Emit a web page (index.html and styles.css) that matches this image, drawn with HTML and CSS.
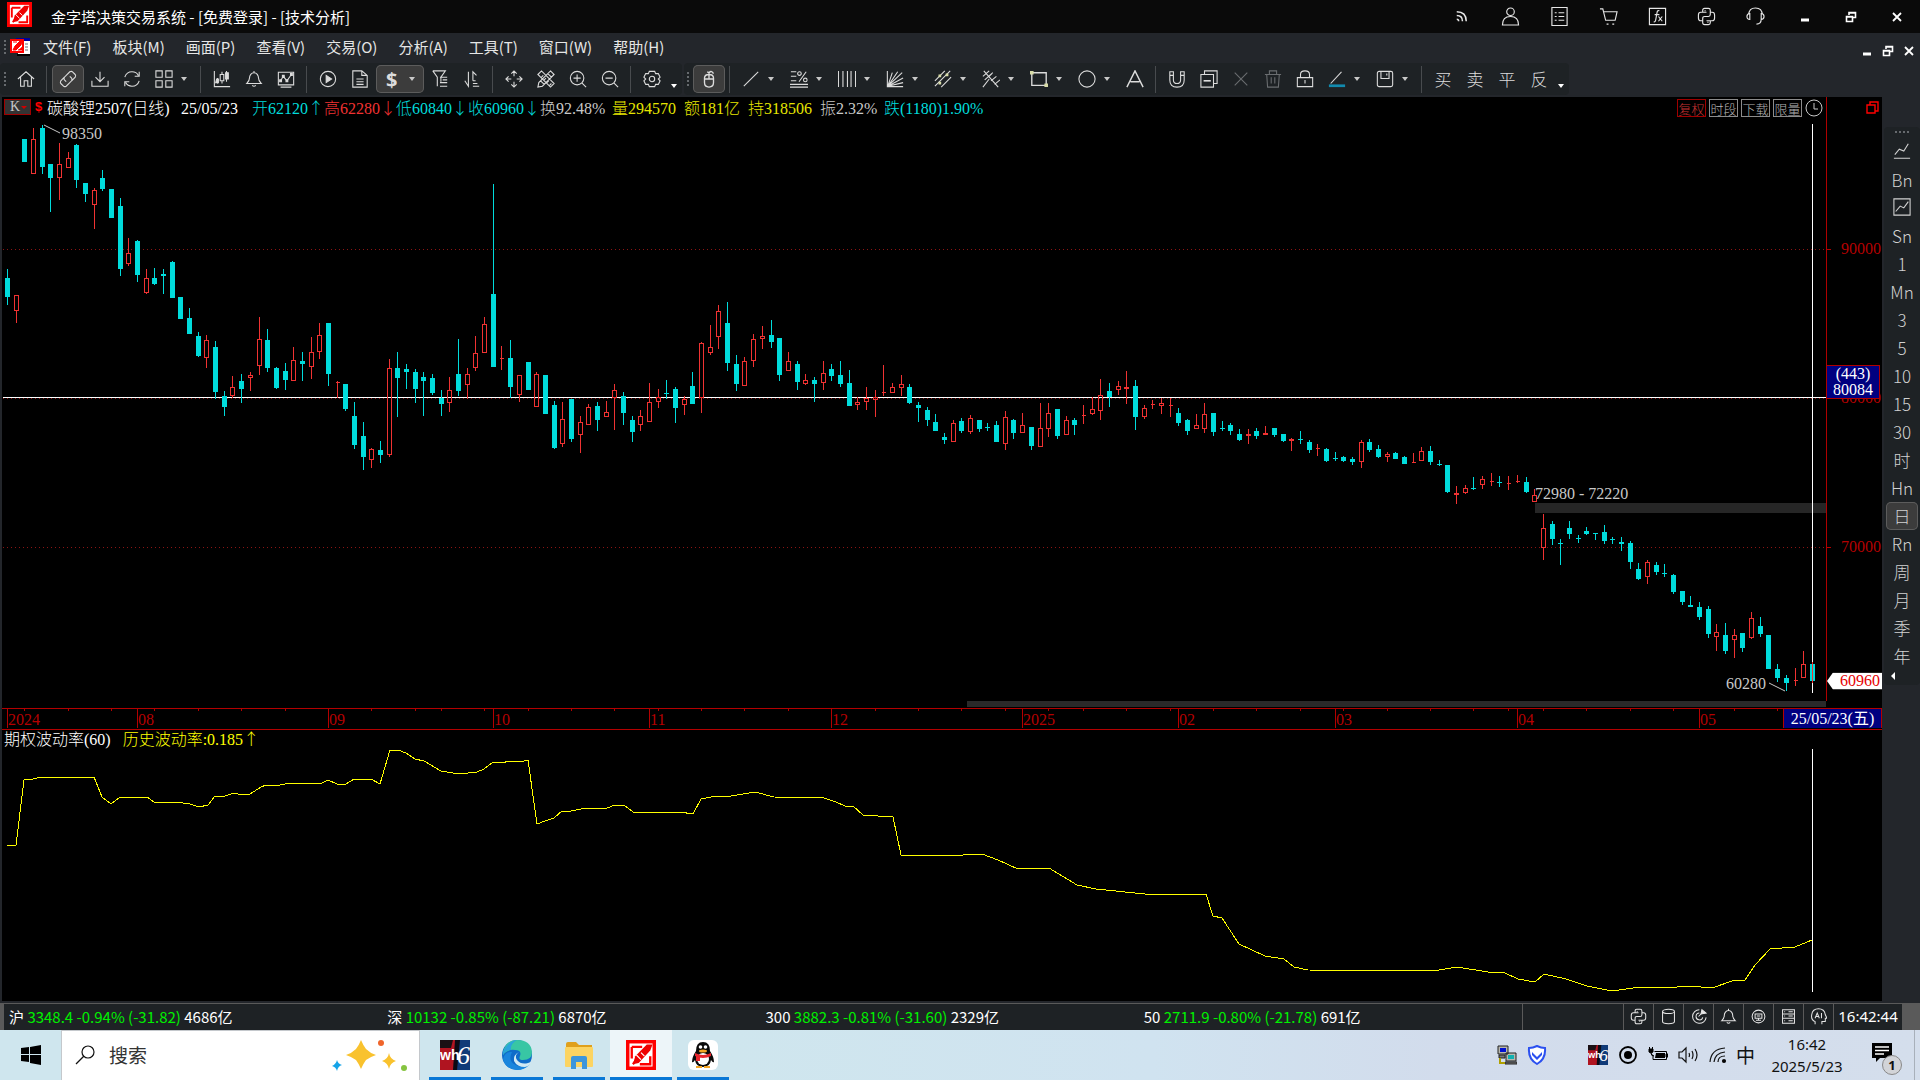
FILE: index.html
```html
<!DOCTYPE html>
<html lang="zh-CN">
<head>
  <meta charset="UTF-8" />
  <title>金字塔决策交易系统</title>
  <meta name="viewport" content="width=device-width, initial-scale=1.0" />
  <link rel="stylesheet" href="styles.css">
</head>
<body>
  <!-- shared icons -->
  <svg class="defs" aria-hidden="true">
    <symbol id="i-logo" viewBox="0 0 26 26"><rect width="26" height="26" fill="#f00"/><rect x="3" y="3" width="20" height="20" fill="#fff"/><path d="M5 6h9M5 6v10M6 21l3-4M21 14v7h-9" stroke="#f00" stroke-width="2" fill="none"/><path d="M6 21l2-7L18 4h5L21 9 11 20z" fill="#e00"/><path d="M9 13l4 4M13 11l3 3" stroke="#fff" stroke-width="1"/></symbol>
    <symbol id="i-bell" viewBox="0 0 20 20"><path d="M10 1v2M10 3c-3 0-5 3-5 6 0 3-1 4-3 6h16c-2-2-3-3-3-6 0-3-2-6-5-6zM8 17q2 2 4 0"/></symbol>
    <symbol id="i-python" viewBox="0 0 20 20"><path d="M6 5V3.500Q6 1.500 8 1.500h4q2 0 2 2V8q0 2-2 2H8q-2 0-2 2v2.500H4q-2.500 0-2.500-3V8.500q0-3 2.500-3h6M14 5.500h2q2.500 0 2.500 3v3q0 3-2.500 3h-6M14 14.500v2q0 2-2 2H8q-2 0-2-2v-2M8.500 3.500v1M11.500 15.500v1"/></symbol>
    <symbol id="i-restore" viewBox="0 0 12 12"><path d="M4 4V1.500h6.500v5H8M1.500 5.500h6v5h-6zM4 2h6.500M1.500 6h6" stroke-width="1.600"/></symbol>
    <symbol id="i-close" viewBox="0 0 12 12"><path d="M2 2l8 8M10 2l-8 8" stroke-width="1.800"/></symbol>
    <symbol id="i-min" viewBox="0 0 12 12"><path d="M2 9h8" stroke-width="3"/></symbol>
  </svg>

  <header class="titlebar">
    <svg class="logo"><use href="#i-logo"/></svg>
    <h1>金字塔决策交易系统 - [免费登录] - [技术分析]</h1>
    <div class="title-tools">
      <button aria-label="资讯"><svg class="ico" viewBox="0 0 20 20"><path d="M5 5q10 0 10 10M5 9q6 0 6 6M5 13q2 0 2 2" stroke-width="1.600"/></svg></button>
      <button aria-label="用户"><svg class="ico" viewBox="0 0 20 20"><circle cx="10" cy="5" r="4"/><path d="M1.500 19q0-9 8.500-9t8.500 9z"/></svg></button>
      <button aria-label="列表"><svg class="ico" viewBox="0 0 20 20"><path d="M2 .5h16v19H2zM5 6h2M9 6h6M5 10h2M9 10h6M5 14h2M9 14h6"/></svg></button>
      <button aria-label="商城"><svg class="ico" viewBox="0 0 20 20"><path d="M1 2h3l3 12h10l2-9H5M8 18h2M14 18h2"/></svg></button>
      <button aria-label="公式"><svg class="ico" viewBox="0 0 20 20"><path d="M1.500 1.500h17v17h-17zM12 4q-2-1-2.500 2L8 14q-.5 2-2 1.500M7 8h5M11 10l4 5M15 10l-4 5"/></svg></button>
      <button aria-label="Python"><svg class="ico"><use href="#i-python"/></svg></button>
      <button aria-label="客服"><svg class="ico" viewBox="0 0 20 20"><path d="M3 8q0-7 7-7t7 7M4 7v6q-3 0-3-3t3-3zM16 7v6q3 0 3-3t-3-3zM16 13q0 5-5 5"/></svg></button>
    </div>
    <div class="win-tools">
      <button aria-label="最小化"><svg class="ico"><use href="#i-min"/></svg></button>
      <button aria-label="还原"><svg class="ico"><use href="#i-restore"/></svg></button>
      <button aria-label="关闭"><svg class="ico"><use href="#i-close"/></svg></button>
    </div>
  </header>

  <nav class="menubar">
    <span class="grip"></span>
    <svg class="menu-logo" viewBox="0 0 20 18"><path d="M8 0h12v16H8z" fill="#fff"/><path d="M6 0h14v3H6z" fill="#00009a"/><path d="M7 16h13v2H7z" fill="#000"/><path d="M15 6h3M15 9h3M15 12h3" stroke="#667"/><rect y="1" width="14" height="14" fill="#f00"/><rect x="2" y="3" width="10" height="10" fill="#fff"/><path d="M3 12l2-4 5-5h2l-1 4-5 5zM3 4h4M8 12h4V9" fill="#f00" stroke="#f00"/></svg>
    <button>文件(F)</button>
    <button>板块(M)</button>
    <button>画面(P)</button>
    <button>查看(V)</button>
    <button>交易(O)</button>
    <button>分析(A)</button>
    <button>工具(T)</button>
    <button>窗口(W)</button>
    <button>帮助(H)</button>
    <div class="doc-tools">
      <button aria-label="最小化"><svg class="ico"><use href="#i-min"/></svg></button>
      <button aria-label="还原"><svg class="ico"><use href="#i-restore"/></svg></button>
      <button aria-label="关闭"><svg class="ico"><use href="#i-close"/></svg></button>
    </div>
  </nav>

  <div class="toolbars">
    <div class="toolbar">
      <span class="grip"></span>
      <button aria-label="首页"><svg class="ico" viewBox="0 0 20 20"><path d="M1 10l9-8 9 8M4 8v10h4v-6h4v6h4V8"/></svg></button>
      <i class="sep"></i>
      <button class="on" aria-label="联动"><svg class="ico" viewBox="0 0 20 20"><path d="M8 13l-2-2q-1-1 0-3l6-6q2-1 3 0l3 3q1 1 0 3l-4 4M12 7l2 2q1 1 0 3l-6 6q-2 1-3 0l-3-3q-1-1 0-3l4-4"/></svg></button>
      <button aria-label="下载"><svg class="ico" viewBox="0 0 20 20"><path d="M10 2v11M5 8l5 5 5-5M1 12v6h18v-6"/></svg></button>
      <button aria-label="刷新"><svg class="ico" viewBox="0 0 20 20"><path d="M2 8q2-6 8-6 5 0 7 4M18 2v5h-5M18 12q-2 6-8 6-5 0-7-4M2 18v-5h5"/></svg></button>
      <button class="drop" aria-label="布局"><svg class="ico" viewBox="0 0 20 20"><path d="M1 1h7v7H1zM12 1h7v7h-7zM1 12h7v7H1zM12 12h7v7h-7z"/></svg></button>
      <i class="sep"></i>
      <button aria-label="K线"><svg class="ico" viewBox="0 0 20 20"><path d="M1.500 1v17.500H19M5 9v6M10 2v3M10 12v3M15 1v12"/><path d="M8 5h4v7H8z"/><path d="M14 3h3v7h-3zM4 10h2v4H3z" fill="currentColor"/></svg></button>
      <button aria-label="提醒"><svg class="ico"><use href="#i-bell"/></svg></button>
      <button aria-label="走势"><svg class="ico" viewBox="0 0 20 20"><path d="M1.500 2.500h17v14h-17zM4 19h12M4 12l3-5 4 5 5-7"/><path d="M6 6h2v2H6zM10 11h2v2h-2zM15 4h2v2h-2zM3 11h2v2H3z" fill="currentColor"/></svg></button>
      <i class="sep"></i>
      <button aria-label="播放"><svg class="ico" viewBox="0 0 20 20"><circle cx="10" cy="10" r="8.500"/><path d="M8 6l6 4-6 4z" fill="currentColor"/></svg></button>
      <button aria-label="报告"><svg class="ico" viewBox="0 0 20 20"><path d="M2 1h10l6 5v13H2zM12 1v5h6M6 10h8M6 13h8M6 16h8"/></svg></button>
      <button class="drop on dollar">$</button>
      <button aria-label="筛选"><svg class="ico" viewBox="0 0 20 20"><path d="M2 1h14l-5 7v5M2 1l5 7v10M10 8h8M13 11h5M10 14h8M10 18h8"/></svg></button>
      <button aria-label="排序"><svg class="ico" viewBox="0 0 20 20"><path d="M2 12l4 6V2M11 12V2l4 4M11 12h3M11 15h5M11 18h7"/></svg></button>
      <i class="sep"></i>
      <button aria-label="移动"><svg class="ico" viewBox="0 0 20 20"><path d="M10 1v6M10 13v6M1 10h6M13 10h6M7 4l3-3 3 3M7 16l3 3 3-3M4 7l-3 3 3 3M16 7l3 3-3 3"/></svg></button>
      <button aria-label="画线工具"><svg class="ico" viewBox="0 0 20 20"><path d="M1 5l4-4 14 14-4 4zM15 1l4 4L6 18l-5 1 1-5zM5 8l2-2M8 11l2-2M11 14l2-2M14 17l2-2M12 4l4 4M4 12l4 4"/></svg></button>
      <button aria-label="放大"><svg class="ico" viewBox="0 0 20 20"><circle cx="9" cy="9" r="7.500"/><path d="M14.500 14.500L19 19M5 9h8M9 5v8"/></svg></button>
      <button aria-label="缩小"><svg class="ico" viewBox="0 0 20 20"><circle cx="9" cy="9" r="7.500"/><path d="M14.500 14.500L19 19M5 9h8"/></svg></button>
      <i class="sep"></i>
      <button aria-label="设置"><svg class="ico" viewBox="0 0 20 20"><path d="M7 1.500h6l1 2.500 3 0 2 4-2 2 2 2-2 4-3 0-1 2.500H7L6 16l-3 0-2-4 2-2-2-2 2-4 3 0z"/><circle cx="10" cy="10" r="3"/></svg></button>
      <span class="more"></span>
    </div>
    <div class="toolbar">
      <span class="grip"></span>
      <button class="on" aria-label="鼠标"><svg class="ico" viewBox="0 0 20 20"><path d="M5 9q0-4 5-4t5 4v5q0 5-5 5t-5-5zM5 10h10M10 5v5M10 5V3q3-3 5 1M8 2l2 1" stroke-width="1.500"/></svg></button>
      <i class="sep"></i>
      <button class="drop" aria-label="直线"><svg class="ico" viewBox="0 0 20 20"><path d="M2 18L18 2"/></svg></button>
      <button class="drop" aria-label="百分比"><svg class="ico" viewBox="0 0 20 20"><path d="M1 2h6M1 7h6M1 12h6M0 16h20M0 19h20M18 2l-8 11"/><circle cx="10.500" cy="4" r="2"/><circle cx="17" cy="11" r="2"/></svg></button>
      <button class="drop" aria-label="周期线"><svg class="ico" viewBox="0 0 20 20"><path d="M.5 1v18M5.500 1v18M10.500 1v18M14.500 1v18M19.500 1v18"/></svg></button>
      <button class="drop" aria-label="扇形线"><svg class="ico" viewBox="0 0 20 20"><path d="M1.500 1v17.500H19M2 18L7 3M2 18L13 2M2 18L18 3M2 18L19 9M2 18l17-4"/></svg></button>
      <button class="drop" aria-label="通道线"><svg class="ico" viewBox="0 0 20 20"><path d="M1 12L12 1M1 18L18 1M8 19L19 8"/><path d="M5 5h3v3H5zM13 4h3v3h-3zM5 13h3v3H5z" class="knob"/></svg></button>
      <button class="drop" aria-label="波浪线"><svg class="ico" viewBox="0 0 20 20"><path d="M2 1l16 18M1 7l7-6M3 11l9-8M1 19L8 10M10 12l6-5M14 16l6-5M7 8l4-4"/></svg></button>
      <button class="drop" aria-label="矩形"><svg class="ico" viewBox="0 0 20 20"><path d="M2 3h16v14H2z" stroke-width="1.500"/><path d="M0 1h4v4H0zM16 15h4v4h-4z" class="knob"/></svg></button>
      <button class="drop" aria-label="圆"><svg class="ico" viewBox="0 0 20 20"><circle cx="10" cy="10" r="9"/></svg></button>
      <button aria-label="文字"><svg class="ico" viewBox="0 0 20 20"><path d="M1 19L10 1l9 18M5 13h10" stroke-width="1.600"/></svg></button>
      <i class="sep"></i>
      <button aria-label="吸附"><svg class="ico" viewBox="0 0 20 20"><path d="M2 2h4v9q0 4 4 4t4-4V2h4v9q0 8-8 8t-8-8zM2 6h4M14 6h4"/></svg></button>
      <button aria-label="复制"><svg class="ico" viewBox="0 0 20 20"><path d="M1 5h14v14H1zM5 5V1h14v14h-4"/><path d="M4 12h8" stroke-width="1.800"/></svg></button>
      <button class="dim" aria-label="清除"><svg class="ico" viewBox="0 0 20 20"><path d="M3 3l14 14M17 3L3 17"/></svg></button>
      <button class="dim" aria-label="删除"><svg class="ico" viewBox="0 0 20 20"><path d="M1 5h18M3 5l1 14h12l1-14M6 5V1h8v4M8 8v7M12 8v7"/></svg></button>
      <button aria-label="锁定"><svg class="ico" viewBox="0 0 20 20"><path d="M1.500 8.500h17v10h-17zM5 8V5q0-4 5-4t5 4v3M10 11v4"/></svg></button>
      <button class="drop" aria-label="画笔颜色"><svg class="ico" viewBox="0 0 20 20"><path d="M3 15L15 2"/><path d="M1 17.500h18" class="pen-color"/></svg></button>
      <button class="drop" aria-label="保存"><svg class="ico" viewBox="0 0 20 20"><rect x="1.500" y="1.500" width="17" height="17" rx="2"/><path d="M5.500 1.500v8h9v-8M12 4v2"/></svg></button>
      <i class="sep"></i>
      <button class="word">买</button>
      <button class="word">卖</button>
      <button class="word">平</button>
      <button class="word">反</button>
      <span class="more"></span>
    </div>
  </div>

  <main class="workspace">
    <section class="charts">
      <div class="price">
        <div class="quote">
          <button class="k-btn">K<i></i></button>
          <span class="s-mark">$</span>
          <div class="quote-items">
            <span class="white">碳酸锂2507(日线)</span>
            <span class="white">25/05/23</span>
            <span class="down">开62120<b>↑</b></span>
            <span class="up">高62280<b>↓</b></span>
            <span class="down">低60840<b>↓</b></span>
            <span class="down">收60960<b>↓</b></span>
            <span>换92.48%</span>
            <span class="gold">量294570</span>
            <span class="gold">额181亿</span>
            <span class="gold">持318506</span>
            <span>振2.32%</span>
            <span class="down">跌(1180)1.90%</span>
          </div>
          <div class="badges">
            <button class="red">复权</button>
            <button>时段</button>
            <button>下载</button>
            <button>限量</button>
            <svg class="clock" viewBox="0 0 18 18"><circle cx="9" cy="9" r="8"/><path d="M9 4v6h4"/></svg>
          </div>
        </div>
        <svg class="plot" id="pricePlot" viewBox="2 121 1824 580" preserveAspectRatio="none"></svg>
        <div class="price-axis">
          <svg class="stack-icon" viewBox="0 0 13 13"><path d="M1 4h8v8H1zM4 4V1h8v9H9"/></svg>
          <span class="tick-label" style="top: 25.2%">90000</span>
          <span class="tick-label" style="top: 49.9%">80000</span>
          <span class="tick-label" style="top: 74.5%">70000</span>
          <span class="cross-label" style="top: 44.4%">(443)<br>80084</span>
          <span class="last-label" style="top: 96.7%">60960</span>
        </div>
      </div>
      <div class="scroll-track"><i></i></div>
      <div class="date-axis" id="dateAxis">
        <span class="date-box">25/05/23(五)</span>
      </div>
      <div class="vol">
        <div class="vol-head"><span>期权波动率(60)</span><span class="gold">历史波动率:0.185<b>↑</b></span></div>
        <svg class="plot" id="volPlot" viewBox="2 749 1824 252" preserveAspectRatio="none"></svg>
      </div>
    </section>

    <aside class="side">
      <div class="periods">
        <span class="dots"></span>
        <button aria-label="分时"><svg class="ico" viewBox="0 0 20 20"><path d="M1 18h18M2 14l5-6 5 2 5-8"/></svg></button>
        <button>Bn</button>
        <button aria-label="走势图"><svg class="ico" viewBox="0 0 20 20"><path d="M1 1h18v18H1zM3 15l5-6 4 2 5-7"/></svg></button>
        <button>Sn</button>
        <button>1</button>
        <button>Mn</button>
        <button>3</button>
        <button>5</button>
        <button>10</button>
        <button>15</button>
        <button>30</button>
        <button>时</button>
        <button>Hn</button>
        <button class="on">日</button>
        <button>Rn</button>
        <button>周</button>
        <button>月</button>
        <button>季</button>
        <button>年</button>
        <span class="fold"></span>
      </div>
    </aside>
  </main>

  <footer class="statusbar">
    <div class="indices">
      <span>沪 <em>3348.4 -0.94% (-31.82)</em> 4686亿</span>
      <span>深 <em>10132 -0.85% (-87.21)</em> 6870亿</span>
      <span>300 <em>3882.3 -0.81% (-31.60)</em> 2329亿</span>
      <span>50 <em>2711.9 -0.80% (-21.78)</em> 691亿</span>
    </div>
    <div class="status-gap"></div>
    <button aria-label="Python"><svg class="ico"><use href="#i-python"/></svg></button>
    <button aria-label="数据"><svg class="ico" viewBox="0 0 20 20"><ellipse cx="10" cy="4" rx="7" ry="2.500"/><path d="M3 4v12q0 2.500 7 2.500t7-2.500V4"/></svg></button>
    <button aria-label="雷达"><svg class="ico" viewBox="0 0 20 20"><path d="M11 2a8 8 0 1 0 8 9M11 6a4 4 0 1 0 4 5M10 10l4-4"/><path d="M13 7l1-5 5 4z" fill="currentColor"/></svg></button>
    <button aria-label="提醒"><svg class="ico"><use href="#i-bell"/></svg></button>
    <button aria-label="连接"><svg class="ico" viewBox="0 0 20 20"><circle cx="10" cy="10" r="7.500"/><path d="M6 7h8v5H6zM10 12v2M7 14.500h6M8 9.500h4"/></svg></button>
    <button aria-label="服务器"><svg class="ico" viewBox="0 0 20 20"><path d="M3 2h14v16H3zM3 7h14M3 12h14M10 4.500h5M10 9.500h5M10 15h5M5 4.500h1M5 9.500h1M5 15h1"/></svg></button>
    <button aria-label="AI"><svg class="ico" viewBox="0 0 20 20"><path d="M6 19v-3Q1 14 2 8q1-7 8-7t8 7l2 4h-2v4h-4v3M6 12l2.500-6 2.500 6M7 10h3M13.500 6v6"/></svg></button>
    <time>16:42:44</time>
    <i class="size-grip"></i>
  </footer>

  <div class="taskbar">
    <button class="start" aria-label="开始"><svg viewBox="0 0 20 20"><path d="M0 3l8-1v7H0zM9 2l11-2v9H9zM0 10h8v7l-8-1zM9 10h11v10L9 18z" fill="#000"/></svg></button>
    <label class="search">
      <svg class="ico" viewBox="0 0 20 20"><circle cx="13" cy="7" r="6"/><path d="M9 11l-8 8"/></svg>
      <input type="text" placeholder="搜索" aria-label="搜索">
      <svg class="sparkle" viewBox="0 0 76 32"><path d="M30 1q2 5 5 9 4 4 10 6-6 2-10 5-3 4-5 9-2-5-5-9-4-3-10-5 6-2 10-6 3-4 5-9z" fill="#f9c22e"/><path d="M58 14q1 6 7 8-6 2-7 8-1-6-7-8 6-2 7-8z" fill="#f9c22e"/><path d="M6 21q1 4 5 5-4 1-5 6-1-4-5-5 4-2 5-6z" fill="#14a3e8"/><circle cx="50" cy="4" r="3" fill="#f0652b"/><circle cx="73" cy="29" r="3" fill="#86c440"/></svg>
    </label>
    <div class="apps">
      <button aria-label="文华财经"><svg viewBox="0 0 30 30"><rect width="15" height="30" fill="#b01420"/><rect x="15" width="15" height="30" fill="#103a78"/><path d="M0 0h13l-2 8H0z" fill="#1a1014"/><path d="M15 0h5l-3 30h-4z" fill="#0a0a14"/><text x="0" y="20" class="wh-text">wh</text><text x="17" y="24" class="wh-six">6</text></svg></button>
      <button aria-label="Edge"><svg viewBox="0 0 30 30"><circle cx="15" cy="15" r="15" fill="#0f6cc9"/><path d="M1 12Q4 0 15 0q14 0 15 12 0 8-9 8-5 0-3-4 2-6-5-6Q5 9 1 15z" fill="#38c6a4"/><path d="M1 12Q6 1 15 0 8 4 9 10 4 10 1 15z" fill="#2aa4dc"/><path d="M10 12q-4 8 2 12 7 5 16 0-5 6-13 6Q3 29 1 19q2-8 9-7z" fill="#1a86dd"/><path d="M17 12q-5 3-2 8 4 5 11 3l3-1q-1 4-6 5-8 0-11-6-1-6 5-9z" fill="#d0e9f3"/></svg></button>
      <button aria-label="文件资源管理器"><svg viewBox="0 0 30 30"><path d="M2 4q0-2 2-2h8l3 3h13v9H2z" fill="#e0a01c"/><rect x="1" y="7" width="28" height="20" rx="1" fill="#fcd462"/><path d="M7 29V18q0-2 2-2h12q2 0 2 2v11h-5v-7h-6v7z" fill="#3c96dc"/></svg></button>
      <button class="active" aria-label="金字塔"><svg viewBox="0 0 30 30"><use href="#i-logo"/></svg></button>
      <button aria-label="QQ"><svg viewBox="0 0 30 30"><rect width="30" height="30" rx="6" fill="#fff"/><path d="M15 2q7 0 7 9 4 6 4 11-1 1-3-2-1 7-8 7t-8-7q-2 3-3 2 0-5 4-11 0-9 7-9z" fill="#0a0a0a"/><ellipse cx="15" cy="19" rx="6" ry="6" fill="#fff"/><path d="M7 13q8 4 16 0v3q-8 4-16 0zM8 16h4v5H8z" fill="#e8252c"/><circle cx="12.500" cy="7" r="1.800" fill="#fff"/><circle cx="17.500" cy="7" r="1.800" fill="#fff"/><ellipse cx="15" cy="11" rx="4" ry="1.500" fill="#f5a623"/><path d="M8 26h6v2H8zM16 26h6v2h-6z" fill="#f5a623"/></svg></button>
    </div>
    <div class="tray">
      <svg viewBox="0 0 20 20"><path d="M1 1h10v8H1zM9 8h10v8H9z" fill="#b8b8b0" stroke="#222"/><path d="M3 3h6v4H3z" fill="#0010d0"/><path d="M11 10h6v4h-6z" fill="#10b0b0"/><path d="M2 10h6v3H2zM8 17h12v2H8z" fill="#777" stroke="#222"/><path d="M3 13v5h5" stroke="#b0a000" stroke-width="2" fill="none"/></svg>
      <svg class="shield" viewBox="0 0 20 20"><path d="M10 1q4 2 8 2 1 11-8 16Q1 14 2 3q4 0 8-2z" fill="#fff" stroke="#2b50f0" stroke-width="2"/><path d="M5 7l5 5 5-5v3l-5 5-5-5z" fill="#2b50f0"/></svg>
      <svg viewBox="0 0 30 30"><rect width="15" height="30" fill="#b01420"/><rect x="15" width="15" height="30" fill="#103a78"/><path d="M0 0h13l-2 8H0z" fill="#1a1014"/><path d="M15 0h5l-3 30h-4z" fill="#0a0a14"/><text x="0" y="20" class="wh-text">wh</text><text x="17" y="24" class="wh-six">6</text></svg>
      <svg viewBox="0 0 20 20"><circle cx="10" cy="10" r="8" fill="none" stroke="#000" stroke-width="1.800"/><circle cx="10" cy="10" r="4" fill="#000"/></svg>
      <svg viewBox="0 0 20 20"><path d="M6.500 6.500h12v8H5v-4" fill="none" stroke="#000"/><path d="M8 8h9v5H7z" fill="#000"/><path d="M18 9h2v3h-2zM1 4h4v3q-2 2-4 0zM1.500 2v2M4.500 2v2M3 8q0 3 3 3" stroke="#000"/></svg>
      <svg class="ico dark" viewBox="0 0 20 20"><path d="M1 7h3l4-4v14l-4-4H1zM11 8q1 2 0 4M14 6q2 4 0 8M17 4q4 6 0 12"/></svg>
      <svg class="ico dark" viewBox="0 0 20 20"><path d="M2 17Q3 4 17 3M6 17Q7 8 17 7M10 17q0-6 7-6"/><circle cx="16" cy="16" r="1.500" fill="#000"/></svg>
      <span class="ime">中</span>
      <div class="datetime"><span>16:42</span><span>2025/5/23</span></div>
      <button class="notice" aria-label="通知"><svg viewBox="0 0 22 20"><path d="M1 0h20v15H9l-4 4v-4H1z" fill="#000"/><path d="M4 4h14M4 7.500h14M4 11h9" stroke="#fff" stroke-width="1.500"/></svg><span>1</span></button>
    </div>
    <i class="show-desktop"></i>
  </div>

  <script src="chart.js"></script>
</body>
</html>
```
FILE: styles.css
```css
* {
  box-sizing: border-box;
}

html, body {
  margin: 0;
  padding: 0;
  height: 100%;
}

body {
  display: flex;
  flex-direction: column;
  min-height: 100vh;
  background: #23262b;
  color: #e6e6e6;
  font-family: "Noto Sans CJK SC", "Noto Sans", sans-serif;
  font-size: 15px;
  overflow: hidden;
}

button {
  margin: 0;
  padding: 0;
  border: 0;
  background: none;
  color: inherit;
  font: inherit;
  cursor: pointer;
}

.defs {
  position: absolute;
  width: 0;
  height: 0;
}

.ico {
  display: block;
  width: 18px;
  height: 18px;
  fill: none;
  stroke: currentColor;
  stroke-width: 1.2;
}

.wh-text {
  font: bold 14px "Liberation Sans", sans-serif;
  fill: #fff;
  stroke: none;
}

.wh-six {
  font: italic 26px "Liberation Serif", serif;
  fill: #fff;
  stroke: none;
}

.grip {
  width: 2px;
  height: 14px;
  background: repeating-linear-gradient(#666a6e 0 2px, transparent 2px 4px);
}

/* title bar */
.titlebar {
  display: flex;
  align-items: center;
  flex: none;
  height: 33px;
  padding-left: 7px;
  background: #0a0a0a;
}

.logo {
  width: 25px;
  height: 25px;
  margin: 0 19px 4px 0;
}

.titlebar h1 {
  margin: 0;
  font-size: 15px;
  font-weight: normal;
  color: #fff;
}

.title-tools, .win-tools, .doc-tools {
  display: flex;
}

.title-tools {
  margin: 0 2px 0 auto;
}

.title-tools button {
  display: grid;
  place-items: center;
  width: 49px;
  height: 32px;
}

.title-tools .ico {
  width: 19px;
  height: 19px;
}

.win-tools button {
  display: grid;
  place-items: center;
  width: 46px;
  height: 30px;
  color: #fff;
}

.win-tools .ico, .doc-tools .ico {
  width: 12px;
  height: 12px;
}

/* menu */
.menubar {
  display: flex;
  align-items: center;
  flex: none;
  gap: 21px;
  height: 30px;
  padding: 0 0 3px 4px;
}

.menubar .grip {
  margin-right: -17px;
}

.menu-logo {
  width: 20px;
  height: 18px;
  margin-right: -8px;
}

.doc-tools {
  gap: 9px;
  margin: 8px 5px 0 auto;
}

.doc-tools button {
  color: #fff;
}

/* toolbars */
.toolbars {
  display: flex;
  flex: none;
  gap: 2px;
  height: 34px;
  padding-bottom: 2px;
}

.toolbar {
  display: flex;
  align-items: center;
  padding-right: 2px;
  border-radius: 4px;
  background: #1e2225;
  color: #dcdcdc;
}

.toolbar .grip {
  margin: 0 4px 0 3px;
}

.toolbar:first-child .grip {
  margin: 0 4px;
}

.toolbar button {
  display: flex;
  align-items: center;
  justify-content: center;
  width: 32px;
  height: 28px;
  border-radius: 5px;
}

.toolbar .drop {
  justify-content: flex-start;
  gap: 8px;
  width: 48px;
  padding-left: 7px;
}

.drop::after {
  content: "";
  border: 3px solid transparent;
  border-top: 4px solid #c8c8c8;
  border-bottom: 0;
}

.toolbar .on, .periods .on {
  background: #3c3c3c;
  box-shadow: inset 0 0 0 1px #5c5c5c;
}

.toolbar .dollar {
  gap: 12px;
  padding-left: 10px;
  font: bold 20px "Noto Sans", sans-serif;
}

.toolbar .dim {
  color: #6a6d70;
}

.toolbar .word {
  padding-bottom: 2px;
  font-size: 17px;
  font-weight: 300;
}

.sep {
  width: 1px;
  height: 27px;
  margin: 0 5px 0 4px;
  background: #484b4e;
}

.more {
  width: 12px;
  height: 28px;
  display: flex;
  align-items: flex-end;
  justify-content: center;
  padding-bottom: 5px;
}

.more::after {
  content: "";
  border: 3px solid transparent;
  border-top: 4px solid #fff;
  border-bottom: 0;
}

.knob {
  fill: #d8dca8;
  stroke: none;
}

.pen-color {
  stroke: #128aae;
  stroke-width: 3;
}

/* charts */
.workspace {
  display: flex;
  flex: 1;
  min-height: 0;
}

.charts {
  display: flex;
  flex-direction: column;
  flex: 1;
  min-width: 0;
  margin-left: 2px;
  background: #000;
  font-family: "Liberation Serif", "Noto Sans CJK SC", serif;
  font-size: 16px;
  color: #c8c8c8;
}

.charts b {
  font-family: "Noto Sans CJK SC", sans-serif;
  font-weight: 300;
  line-height: 0;
}

.plot {
  display: block;
  width: 100%;
  height: 100%;
  min-height: 0;
}

.price {
  display: grid;
  grid-template-columns: 1fr 56px;
  grid-template-rows: 24px 1fr;
  flex: 604 1 0;
  min-height: 0;
}

.quote {
  display: flex;
  align-items: flex-start;
  padding: 2px 3px 0 2px;
  line-height: 20px;
  font-weight: 300;
}

.k-btn {
  display: flex;
  align-items: center;
  justify-content: space-between;
  width: 27px;
  height: 16px;
  padding: 0 3px 0 5px;
  border: 1px solid #a00000;
  background: #333;
  font-size: 14px;
  line-height: 14px;
}

.k-btn i {
  border: 3px solid transparent;
  border-top: 3px solid #d00000;
  border-bottom: 0;
}

.s-mark {
  width: 16px;
  padding-left: 4px;
  color: #f00;
  font: bold 13px/16px "Liberation Sans", sans-serif;
}

.quote-items {
  display: grid;
  grid-template-columns: 134px 71px repeat(6, 72px) 64px 72px 64px auto;
  white-space: nowrap;
}

.white { color: #fff; }
.gold { color: #e6e600; }
.up { color: #f03232; }
.down { color: #00dcdc; }

.badges {
  display: flex;
  gap: 3px;
  margin-left: auto;
}

.badges button {
  width: 29px;
  height: 18px;
  border: 1px solid #8c8c8c;
  color: #b4b4b4;
  font: 300 13px/15px "Noto Sans CJK SC", sans-serif;
}

.badges .red {
  border-color: #a00000;
  color: #c83232;
}

.clock {
  width: 18px;
  height: 18px;
  fill: none;
  stroke: #c8c8c8;
}

.price-axis {
  grid-column: 2;
  grid-row: 1 / 3;
  position: relative;
  border-left: 1px solid #b00000;
}

.price > .plot {
  grid-column: 1;
  grid-row: 2;
}

.tick-label, .cross-label, .last-label {
  position: absolute;
  right: 1px;
  line-height: 16px;
  transform: translateY(-50%);
}

.tick-label {
  color: #b40000;
}

.tick-label::before {
  content: "";
  position: absolute;
  top: 8px;
  right: 50px;
  width: 4px;
  border-top: 1px solid #b40000;
}

.cross-label {
  left: 0;
  right: 2px;
  border: 1px solid #b00000;
  border-left: 0;
  background: #000080;
  color: #fff;
  text-align: center;
  transform: none;
}

.last-label {
  left: 0;
  right: 0;
  padding: 0 2px 1px 0;
  background: #fff;
  clip-path: polygon(6px 0, 100% 0, 100% 100%, 6px 100%, 0 50%);
  color: #e60000;
  text-align: right;
}

.stack-icon {
  position: absolute;
  top: 4px;
  right: 3px;
  width: 13px;
  height: 13px;
  fill: none;
  stroke: #f00;
  stroke-width: 1.4;
}

.scroll-track {
  flex: none;
  height: 7px;
  padding: 0 56px 1px 0;
}

.scroll-track i {
  display: block;
  width: 47.1%;
  height: 6px;
  margin-left: auto;
  background: #2a2a2a;
}

.date-axis {
  position: relative;
  flex: none;
  height: 22px;
  border: solid #b40000;
  border-width: 1px 0;
  color: #b40000;
  line-height: 21px;
}

.month {
  position: absolute;
  top: 0;
  height: 19px;
  border-left: 1px solid #b40000;
}

.week {
  position: absolute;
  top: 0;
  width: 1px;
  height: 2px;
  background: #b40000;
}

.date-box {
  position: absolute;
  top: 0;
  right: 0;
  width: 99px;
  height: 19px;
  border: solid #b40000;
  border-width: 0 1px;
  background: #000080;
  color: #fff;
  line-height: 19px;
  text-align: center;
}

.vol {
  display: flex;
  flex-direction: column;
  flex: 271 1 0;
  min-height: 0;
}

.vol-head {
  display: flex;
  gap: 12px;
  flex: none;
  height: 19px;
  padding-left: 2px;
  color: #fff;
  font-weight: 300;
  line-height: 19px;
}

.vol-head .gold {
  color: #ff0;
}

.vol .plot {
  flex: 1;
  width: calc(100% - 56px);
}

.plot text {
  fill: #c8c8c8;
}

.grid-line {
  stroke: #8c1414;
  stroke-dasharray: 1 3;
}

.cross-line {
  stroke: #fff;
}

.cross-mark {
  stroke: #f03232;
}

.bar-down {
  fill: #00dcdc;
}

.bar-up {
  fill: none;
  stroke: #f03232;
}

.gap-band {
  fill: #262626;
}

.leader {
  stroke: #c8c8c8;
}

.vol-line {
  fill: none;
  stroke: #ff0;
}

/* period bar */
.side {
  flex: none;
  width: 38px;
  padding: 30px 0 0 2px;
}

.periods {
  display: flex;
  flex-direction: column;
  align-items: center;
  padding-bottom: 5px;
  border-radius: 4px;
  background: #1e2225;
}

.periods button {
  display: grid;
  place-items: center;
  flex: none;
  width: 32px;
  height: 28px;
  padding-bottom: 2px;
  border-radius: 5px;
  color: #d2d2d2;
  font-size: 17px;
  font-weight: 300;
}

.dots {
  flex: none;
  width: 14px;
  height: 2px;
  margin: 4px 0 5px;
  background: repeating-linear-gradient(90deg, #666a6e 0 2px, transparent 2px 4px);
}

.fold {
  align-self: flex-start;
  margin: 2px 0 0 7px;
  border: 4px solid transparent;
  border-right-color: #fff;
  border-left: 0;
}

/* status bar */
.statusbar {
  display: flex;
  flex: none;
  height: 29px;
  border-top: 2px solid #23262b;
  box-shadow: inset 0 1px #5a5a5a;
  background: #1e2225;
}

.indices {
  display: flex;
  flex: 1;
  padding-left: 5px;
  border-left: 4px solid #5a5a5a;
  line-height: 27px;
  color: #fff;
}

.indices span {
  flex: 1;
  white-space: nowrap;
}

.indices em {
  color: #00f000;
  font-style: normal;
}

.status-gap {
  width: 101px;
  border-left: 1px solid #5a5a5a;
}

.statusbar button {
  display: grid;
  place-items: center;
  width: 30px;
  border-left: 1px solid #5a5a5a;
}

.statusbar .ico {
  width: 17px;
  height: 17px;
}

.statusbar time {
  width: 69px;
  border-left: 1px solid #5a5a5a;
  color: #fff;
  font: 15px/27px "Noto Sans", sans-serif;
  text-align: center;
}

.size-grip {
  width: 18px;
  background: #5a5a5a;
}

/* taskbar */
.taskbar {
  display: flex;
  flex: none;
  height: 50px;
  background: linear-gradient(90deg, #cfe6ee, #cfe6ee 38%, #d0e3f0 60%, #d2dcec 75%, #d4deec);
  color: #111;
}

.start {
  display: grid;
  place-items: center;
  width: 61px;
}

.start svg {
  width: 20px;
  height: 20px;
}

.search {
  display: flex;
  align-items: center;
  width: 359px;
  padding: 0 12px 2px 13px;
  border: 1px solid #c4c8cc;
  border-bottom: 0;
  background: #fff;
}

.search .ico {
  width: 20px;
  height: 20px;
  color: #111;
}

.search input {
  flex: 1;
  min-width: 0;
  margin-left: 12px;
  border: 0;
  outline: 0;
  background: none;
  font: 19px "Noto Sans CJK SC", sans-serif;
}

.search input::placeholder {
  color: #333;
}

.sparkle {
  width: 76px;
  height: 32px;
}

.apps {
  display: flex;
  margin-left: 4px;
}

.apps button {
  display: grid;
  place-items: center;
  width: 62px;
  background: linear-gradient(#0a78d6, #0a78d6) bottom / 52px 3px no-repeat;
}

.apps .active {
  background: linear-gradient(#0a78d6, #0a78d6) bottom / 100% 3px no-repeat #edf5f9;
}

.apps svg {
  width: 30px;
  height: 30px;
}

.tray {
  display: flex;
  align-items: center;
  gap: 10px;
  margin-left: auto;
}

.tray svg {
  width: 20px;
  height: 20px;
}

.tray .shield {
  margin-right: 31px;
}

.dark {
  color: #111;
}

.ime {
  width: 20px;
  margin-left: -2px;
  font-size: 19px;
  line-height: 24px;
}

.datetime {
  display: grid;
  width: 82px;
  margin-right: 13px;
  font: 15px/22px "Noto Sans", sans-serif;
  text-align: center;
}

.notice {
  position: relative;
  width: 30px;
  height: 30px;
  margin-right: 13px;
  text-align: left;
}

.notice svg {
  width: 22px;
}

.notice span {
  position: absolute;
  right: -1px;
  bottom: -5px;
  width: 20px;
  height: 20px;
  border: 1px solid #888;
  border-radius: 50%;
  background: #d2d4d8;
  font: bold 13px/18px "Noto Sans", sans-serif;
  text-align: center;
}

.show-desktop {
  width: 6px;
  border-left: 1px solid #a8b0ba;
}
```
FILE: chart.js
```js
const X0 = 7.35, STEP = 8.678;

// one bar per day: direction, high, body top, body bottom, low
const bars = `
c269,278,297,305 r295,295,311,323 c139,139,162,162 r128,139,174,174 c125,128,167,174 c164,164,178,212
r143,164,178,200 r152,158,168,168 c144,145,180,188 c183,183,194,202 r188,190,205,229 c170,178,189,191
c189,189,218,218 c198,206,269,276 r238,253,264,266 c240,241,275,282 r269,278,293,294 c268,278,284,285
c269,274,276,294 c261,262,298,298 c297,297,319,319 c308,318,334,334 c332,336,356,357 r335,340,358,368
c341,347,392,399 c391,396,407,416 r376,387,396,398 c374,381,389,403 r372,375,378,391 r317,339,366,375
c329,340,368,372 c367,368,388,389 c363,371,380,390 r347,360,381,381 c352,361,364,381 r337,352,367,379
r323,335,352,359 c323,323,374,386 r381,382,383,398 c384,384,409,411 c402,416,445,449 c422,436,457,470
r448,449,460,468 c441,450,455,463 r359,368,455,457 c352,368,378,417 c364,369,372,389 c369,372,389,403
c372,377,381,416 c374,378,393,395 c390,398,404,416 r377,390,403,412 c339,374,391,396 r368,374,385,399
r336,353,368,371 r317,324,353,353 c184,294,367,367 r346,358,359,370 c340,358,387,398 r375,375,395,402
c362,362,390,390 r372,374,407,407 c375,375,414,414 c401,405,448,449 r402,419,444,447 c399,399,439,442
r416,422,435,453 r404,407,425,425 c402,406,420,431 r401,412,417,417 r384,390,398,430 c392,396,413,425
c416,420,432,442 r410,416,425,431 r383,402,422,422 r389,397,402,408 c380,393,394,399 c387,389,408,423
r396,399,405,415 c372,386,404,404 r342,343,398,413 r325,347,353,355 r305,311,337,349 c302,323,363,371
c355,364,384,391 r357,361,386,386 r334,339,361,367 r326,336,339,349 c320,335,342,348 c338,338,375,381
r352,361,371,371 c361,364,382,390 r374,380,384,385 c377,380,384,402 r361,373,383,390 c364,369,376,381
c361,375,384,387 c370,383,406,406 r397,402,405,410 r387,398,402,410 r390,397,400,417 r365,392,393,396
r383,387,393,393 r375,384,388,396 c384,387,403,404 c402,405,408,422 c407,410,420,426 c414,422,431,431
c433,437,440,444 r420,423,442,442 c418,421,431,433 r415,418,432,434 c420,420,429,432 c423,427,428,431
c421,425,442,442 r411,417,444,450 c419,420,433,439 r413,425,433,433 c427,427,446,450 r403,428,447,447
r403,413,429,437 c409,409,436,439 r416,420,435,435 c418,420,425,435 r405,415,416,424 r397,409,414,415
r379,395,411,420 c383,391,397,407 r381,386,390,395 r371,387,389,404 c380,386,417,430 r405,408,417,419
r400,404,405,409 r398,403,406,414 r398,405,406,417 c408,413,423,426 c419,420,431,435 r414,425,429,429
r403,414,429,433 c413,413,432,436 c421,428,429,431 c423,425,431,435 c429,434,440,441 r429,434,436,444
c428,431,436,439 r426,433,435,435 c428,428,435,437 c434,434,441,442 r438,439,441,451 c431,439,440,444
c440,442,450,453 r444,448,449,456 c448,449,461,462 c452,458,459,461 c456,457,461,462 c457,459,462,465
r440,442,462,468 c439,442,450,452 c445,449,457,458 r452,454,457,462 c452,453,459,459 c456,457,464,464
r453,462,463,463 r447,451,461,461 c446,451,462,465 c460,464,465,466 c465,465,492,493 r486,493,495,504
r485,488,493,494 c477,488,489,490 r476,479,485,489 r473,481,482,486 c476,482,483,487 r476,483,484,490
r475,481,482,483 c477,482,492,493 r489,495,502,502 r514,528,548,560 c521,524,539,545 c539,543,544,565
c521,528,534,539 c535,538,539,543 c527,531,534,535 c533,533,534,540 c525,532,541,544 c537,539,540,544
c537,542,544,551 c541,543,562,569 c563,569,579,580 r560,562,577,584 c562,565,572,575 c564,573,574,577
c574,575,592,594 c591,591,602,605 c596,605,607,607 c602,607,617,620 c606,609,634,638 r624,632,637,651
c623,635,651,654 r629,635,640,658 c633,633,648,652 r612,618,638,639 c617,626,634,637 c635,635,669,669
c664,669,678,682 c675,678,683,691 r668,680,681,686 r651,664,678,678 c662,664,681,683
`.trim().split(/\s+/);

const months = [[0, "2024"], [15, "08"], [37, "09"], [56, "10"], [74, "11"], [95, "12"],
  [117, "2025"], [135, "02"], [153, "03"], [174, "04"], [195, "05"]];

const weeks = [2, 7, 12, 17, 22, 27, 32, 42, 47, 50, 55, 60, 65, 70, 75, 80, 85, 90, 100, 105, 110,
  115, 120, 124, 129, 134, 139, 144, 149, 154, 159, 164, 169, 173, 177, 182, 187, 192, 199, 204];

const vol = "7,845 16,845 24,780 33,779 41,777 94,777 102,797 111,804 120,797 147,797 154,802 175,802 190,804 " +
  "199,807 208,805 215,796 225,796 234,793 242,795 250,794 261,787 266,785 280,785 290,783 306,783 320,784 " +
  "328,780 337,784 346,784 354,779 371,779 380,784 390,750 398,750 406,753 415,759 424,761 441,771 459,774 " +
  "477,772 484,769 493,762 501,763 510,761 524,761 528,760 537,824 545,821 554,818 562,811 571,811 586,808 " +
  "607,808 615,805 624,805 633,812 680,812 693,814 701,799 716,796 731,796 755,792 774,797 824,798 836,802 " +
  "845,806 853,806 863,815 893,817 901,855 945,856 982,854 998,860 1018,869 1049,868 1077,885 1096,889 " +
  "1145,894 1206,894 1213,916 1222,918 1239,944 1265,956 1284,959 1294,967 1308,970 1433,971 1457,967 " +
  "1488,972 1505,973 1518,979 1535,982 1544,974 1566,979 1587,986 1612,991 1640,987 1665,988 1690,986 " +
  "1712,988 1735,980 1745,980 1755,965 1770,949 1795,947 1812,940";

function barX(i) {
  return Math.floor(X0 + STEP * i);
}

function drawBars() {
  let down = "", up = "";
  bars.forEach((bar, i) => {
    const x = barX(i);
    const [h, t, b, l] = bar.slice(1).split(",").map(Number);
    if (bar[0] === "c") {
      down += `M${x - 2} ${t}h5v${b - t}h-5zM${x} ${h}h1v${l - h}h-1z`;
    } else {
      const bottom = Math.max(b - 0.5, t + 0.5);
      up += `M${x + 0.5} ${h}V${t}M${x + 0.5} ${b}V${l}M${x - 1.5} ${t + 0.5}h4V${bottom}h-4z`;
    }
  });
  return `<path class="bar-down" d="${down}"/><path class="bar-up" d="${up}"/>`;
}

document.getElementById("pricePlot").innerHTML = `
  <rect class="gap-band" x="1535" y="503" width="291" height="10"/>
  <g shape-rendering="crispEdges">
    <path class="grid-line" d="M3 249.500H1826M3 398.500H1826M3 547.500H1826"/>
    <path class="cross-line" d="M3 397.500H1826"/>
    ${drawBars()}
    <path class="cross-line" d="M1812.500 124V693"/>
    <path class="cross-mark" d="M1812.500 662V683"/>
  </g>
  <path class="leader" d="M44 125l16 8M1769 683l16 8"/>
  <text x="62" y="139">98350</text>
  <text x="1535" y="499">72980 - 72220</text>
  <text x="1726" y="689">60280</text>`;

document.getElementById("volPlot").innerHTML = `
  <polyline class="vol-line" points="${vol}" shape-rendering="crispEdges"/>
  <path class="cross-line" d="M1812.500 749V992" shape-rendering="crispEdges"/>`;

const axis = document.getElementById("dateAxis");
const pct = i => (barX(i) - 2) / 1880 * 100;
axis.insertAdjacentHTML("afterbegin",
  weeks.map(i => `<i class="week" style="left:${pct(i)}%"></i>`).join("") +
  months.map(([i, name]) => `<span class="month" style="left:${pct(i)}%">${name}</span>`).join(""));
```
